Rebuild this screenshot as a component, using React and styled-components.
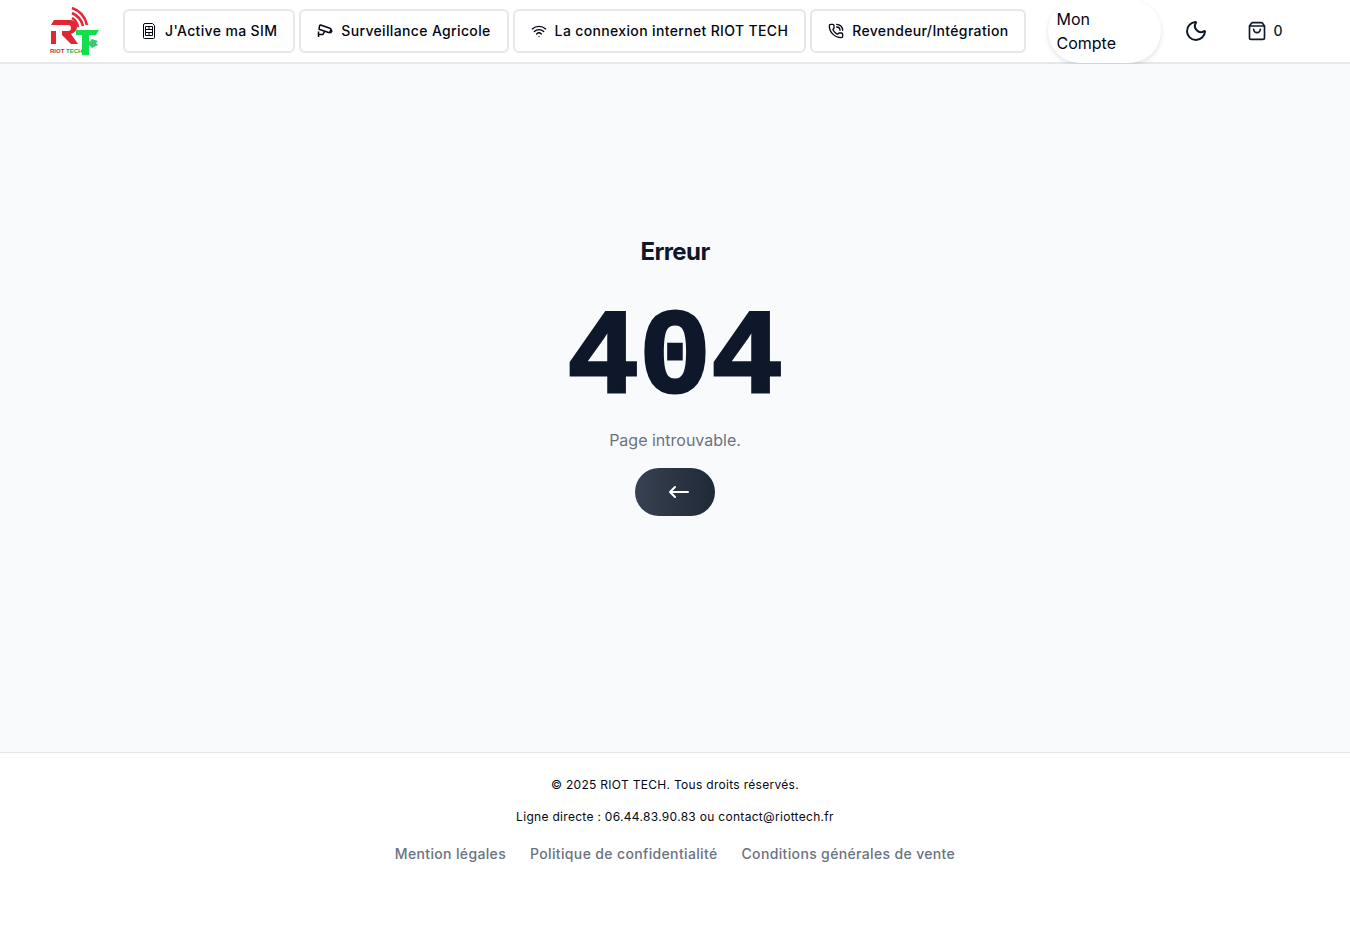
import React from "react";
import styled, { createGlobalStyle } from "styled-components";
import { Moon, PhoneCall, ShoppingBag, Wifi } from "lucide-react";

const colors = {
	ink: "#030712",
	navy: "#0f172a",
	grey: "#6b7280",
	line: "#e5e7eb",
	page: "#f9fafc",
};

const GlobalStyle = createGlobalStyle`
	*, *::before, *::after {
		box-sizing: border-box;
	}

	body {
		margin: 0;
		background: white;
		color: ${colors.ink};
		font-family: Inter, "Liberation Sans", sans-serif;
		font-size: 16px;
		line-height: 24px;
	}

	h1, h2, p {
		margin: 0;
	}

	a {
		color: inherit;
		text-decoration: none;
	}

	button {
		border: none;
		color: inherit;
		font: inherit;
		cursor: pointer;
	}
`;

const Page = styled.div`
	display: flex;
	flex-direction: column;
	min-height: 100vh;
`;

const Header = styled.header`
	display: flex;
	align-items: center;
	height: 64px;
	padding: 0 50px;
	border-bottom: 2px solid ${colors.line};
	background: white;
`;

const HomeLink = styled.a`
	display: flex;
	margin-right: 23px;
`;

const Nav = styled.nav`
	display: flex;
	gap: 4px;
`;

const NavButton = styled.a`
	display: flex;
	align-items: center;
	gap: 8px;
	height: 44px;
	padding: 0 16px;
	border: 2px solid ${colors.line};
	border-radius: 6px;
	font-size: 14px;
	font-weight: 500;
	letter-spacing: 0.025em;
	line-height: 20px;
	white-space: nowrap;
`;

const Actions = styled.div`
	display: flex;
	flex: 1;
	align-items: center;
	margin-left: 22px;
`;

const AccountButton = styled.button`
	width: 113px;
	height: 64px;
	padding: 8px 40px 8px 8px;
	border-radius: 32px;
	background: white;
	box-shadow: 0 2px 5px rgba(0, 0, 0, 0.12);
	text-align: left;
`;

const ThemeButton = styled.button`
	display: flex;
	margin-left: 23px;
	padding: 0;
	background: transparent;
	color: ${colors.navy};
`;

const CartButton = styled.button`
	display: flex;
	align-items: center;
	gap: 6px;
	margin-left: 39px;
	padding: 0;
	background: transparent;
	color: ${colors.navy};
	font-size: 14px;
	font-weight: 500;
`;

const Main = styled.main`
	display: flex;
	flex-direction: column;
	align-items: center;
	padding: 172px 20px 236px;
	background: ${colors.page};
`;

const Title = styled.h2`
	color: ${colors.navy};
	font-size: 24px;
	font-weight: 700;
	letter-spacing: -0.025em;
	line-height: 32px;
`;

const Code = styled.h1`
	margin-top: 28px;
	color: ${colors.navy};
	font-family: "Liberation Mono", monospace;
	font-size: 120px;
	font-weight: 700;
	line-height: 128px;
	-webkit-text-stroke: 3px ${colors.navy};
`;

const Message = styled.p`
	margin-top: 4px;
	color: ${colors.grey};
`;

const BackButton = styled.button`
	display: flex;
	align-items: center;
	width: 80px;
	height: 48px;
	margin-top: 16px;
	padding: 0 0 0 32px;
	border-radius: 24px;
	background: linear-gradient(to right, #374151, #1f2937);
	color: white;
`;

const Footer = styled.footer`
	display: flex;
	flex-direction: column;
	align-items: center;
	padding: 24px 20px;
	border-top: 1px solid ${colors.line};
`;

const FooterText = styled.p`
	margin-bottom: 16px;
	font-size: 12px;
	letter-spacing: 0.025em;
	line-height: 16px;
`;

const FooterLinks = styled.nav`
	display: flex;
	flex-wrap: wrap;
	gap: 24px;
	margin-top: 3px;
	color: ${colors.grey};
	font-size: 14px;
	font-weight: 500;
	letter-spacing: 0.025em;
	line-height: 20px;
`;

const NavIcon = styled.svg`
	flex: none;
	width: 16px;
	height: 16px;
	fill: none;
	stroke: currentColor;
`;

const SimIcon = () => (
	<NavIcon viewBox="0 0 16 16" aria-hidden="true">
		<path d="M4 .5h7.500L13.500 2.500v12a1 1 0 0 1-1 1h-9a1 1 0 0 1-1-1V2A1.500 1.500 0 0 1 4 .5Z" />
		<path d="M4.500 3.500h7v9h-7ZM4.500 6.500h7M4.500 9.500h7M8 3.500v3M8 9.500v3" />
	</NavIcon>
);

const CameraIcon = () => (
	<NavIcon viewBox="0 0 16 16" strokeWidth="1.5" strokeLinejoin="round" aria-hidden="true">
		<path d="M3.500 2 13 5.200q1.200.5.8 1.600l-.8 2q-.5 1-1.500.7L2 6.300 2.500 3q.2-1.100 1-1Z" />
		<path d="M14 6.500l.8 1.500-1 1.500h-1.500M7.500 8.500 6 11.500H1.500M1.500 8.500V14" />
	</NavIcon>
);

const BackArrow = () => (
	<svg
		width="24"
		height="24"
		viewBox="0 0 24 24"
		fill="none"
		stroke="currentColor"
		strokeWidth="2"
		strokeLinecap="round"
		strokeLinejoin="round"
		aria-hidden="true"
	>
		<path d="M21 12H3M8 7l-5 5 5 5" />
	</svg>
);

const Logo = () => (
	<svg width="50" height="50" viewBox="0 0 50 50" role="img" aria-label="RIOT TECH">
		<g fill="none" stroke="#e32636" strokeWidth="2.600">
			<path d="M22 12q5 3 6 9" />
			<path d="M22 7q9 4 11 13" />
			<path d="M22 2q12 4 15 17" />
		</g>
		<path
			d="M1 19 4 14h17q6 1 6 7 0 5-6 7l7 10h-7l-9-9v-4h6q3 0 3-3t-3-3ZM1 25h5v13H1Z"
			fill="#e32636"
		/>
		<path d="M26 24h23l-3 5h-7v20h-7V29h-6Z" fill="#12df50" />
		<path d="m39 36 3-3 6 2-2 2 2 2-6 3-3-3Z" fill="#3fc878" />
		<text
			x="0"
			y="47"
			fontSize="6"
			fontWeight="700"
			fontFamily="Liberation Sans, sans-serif"
			fill="#d92736"
		>
			RIOT
			<tspan x="16" fill="#12b548">
				TECH
			</tspan>
		</text>
	</svg>
);

const App = () => (
	<>
		<GlobalStyle />
		<Page>
			<Header>
				<HomeLink href="#">
					<Logo />
				</HomeLink>
				<Nav>
					<NavButton href="#sim">
						<SimIcon />
						J'Active ma SIM
					</NavButton>
					<NavButton href="#surveillance">
						<CameraIcon />
						Surveillance Agricole
					</NavButton>
					<NavButton href="#internet">
						<Wifi size={16} />
						La connexion internet RIOT TECH
					</NavButton>
					<NavButton href="#revendeur">
						<PhoneCall size={16} />
						Revendeur/Intégration
					</NavButton>
				</Nav>
				<Actions>
					<AccountButton>Mon Compte</AccountButton>
					<ThemeButton aria-label="Mode sombre">
						<Moon size={24} />
					</ThemeButton>
					<CartButton aria-label="Panier">
						<ShoppingBag size={20} />
						0
					</CartButton>
				</Actions>
			</Header>
			<Main>
				<Title>Erreur</Title>
				<Code>404</Code>
				<Message>Page introuvable.</Message>
				<BackButton aria-label="Retour">
					<BackArrow />
				</BackButton>
			</Main>
			<Footer>
				<FooterText>© 2025 RIOT TECH. Tous droits réservés.</FooterText>
				<FooterText>
					Ligne directe : 06.44.83.90.83 ou contact@riottech.fr
				</FooterText>
				<FooterLinks>
					<a href="#mentions">Mention légales</a>
					<a href="#confidentialite">Politique de confidentialité</a>
					<a href="#conditions">Conditions générales de vente</a>
				</FooterLinks>
			</Footer>
		</Page>
	</>
);

export default App;
